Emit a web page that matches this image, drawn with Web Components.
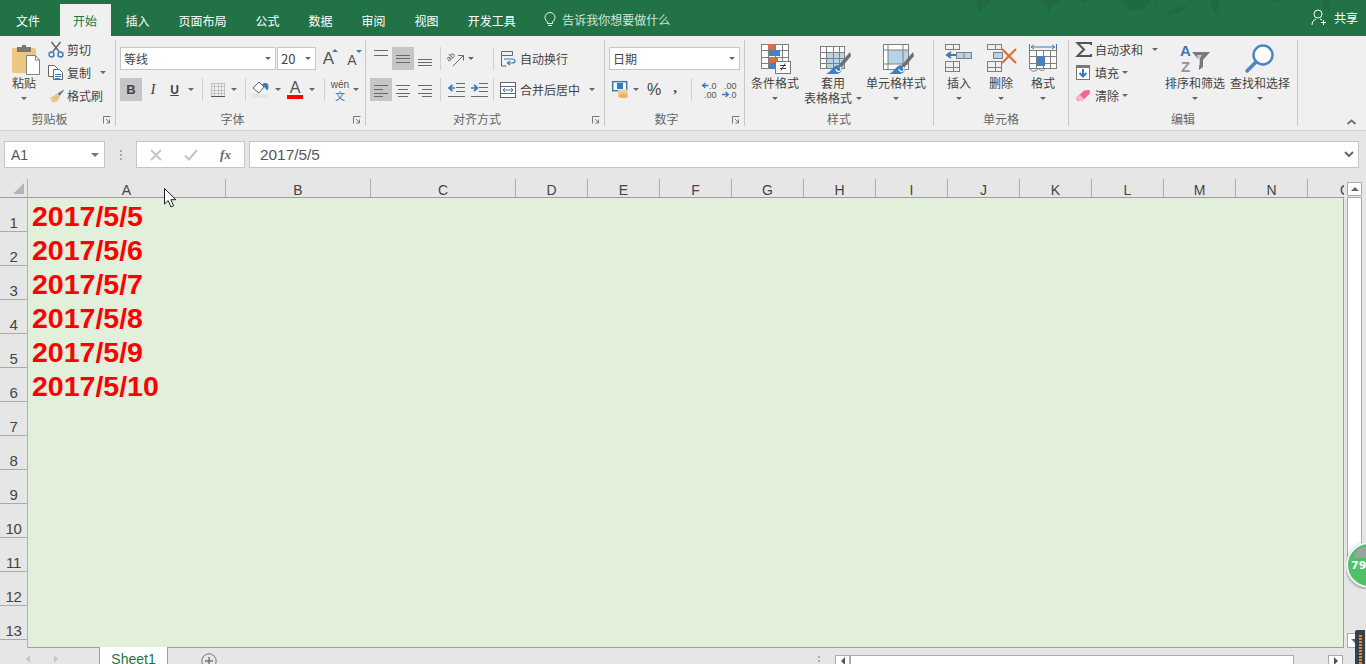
<!DOCTYPE html>
<html lang="zh">
<head>
<meta charset="utf-8">
<title>Excel</title>
<style>
  html, body { margin: 0; height: 664px; overflow: hidden; background: #e6e6e6; }
  body { position: relative; font: 12px "Liberation Sans", "Noto Sans CJK SC", sans-serif; color: #444; }
  .b { font: bold 13px "Liberation Sans", sans-serif; }
  .i { font: italic 15px "Liberation Serif", serif; }
  .u { font: bold 12px "Liberation Sans", sans-serif; text-decoration: underline; }
  .pct { font: 16px "Liberation Sans", sans-serif; }
  .comma { font: bold 15px "Liberation Serif", serif; margin-top: -5px; }
  .grow { font: 17px "Liberation Sans", sans-serif; position: relative; color: #555; }
  .shrink { font: 14px "Liberation Sans", sans-serif; position: relative; color: #555; margin-top: 3px; }
  .grow::after, .shrink::after { content: ""; position: absolute; left: 9px; top: 0; border: 3px solid transparent; }
  .grow::after { border-bottom-color: #3a7ab8; top: -3px; }
  .shrink::after { border-top-color: #3a7ab8; top: -2px; }
  .acolor { font: 16px/15px "Liberation Sans", sans-serif; color: #555; border-bottom: 4px solid #f00; width: 16px; text-align: center; display: block; }
  .wen { display: flex; flex-direction: column; align-items: center; font: 10px/11px "Liberation Sans", sans-serif; color: #555; }
  .wen b { font: 10px/11px "Noto Sans CJK SC", sans-serif; color: #2e75b6; }
  .big-size { font-size: 13px; }
</style>
</head>
<body>
<xl-app>
  <xl-titlebar>
    <xl-tab first>文件</xl-tab>
    <xl-tab active>开始</xl-tab>
    <xl-tab>插入</xl-tab>
    <xl-tab>页面布局</xl-tab>
    <xl-tab>公式</xl-tab>
    <xl-tab>数据</xl-tab>
    <xl-tab>审阅</xl-tab>
    <xl-tab>视图</xl-tab>
    <xl-tab>开发工具</xl-tab>
  </xl-titlebar>

  <xl-ribbon>
    <xl-group w="116" label="剪贴板" launcher pad="7">
      <xl-big w="34" icon="paste" shift="2" caret>粘贴</xl-big>
      <xl-col gap="7">
        <xl-small icon="cut">剪切</xl-small>
        <xl-small icon="copy" caret="9">复制</xl-small>
        <xl-small icon="brush">格式刷</xl-small>
      </xl-col>
    </xl-group>

    <xl-group w="250" label="字体" launcher pad="4">
      <xl-rows>
        <xl-row>
          <xl-select w="157" after="1">等线</xl-select>
          <xl-select w="39"><span class="big-size">20</span></xl-select>
          <xl-btn w="25"><span class="grow">A</span></xl-btn>
          <xl-btn w="22"><span class="shrink">A</span></xl-btn>
        </xl-row>
        <xl-row>
          <xl-btn w="22" active><span class="b">B</span></xl-btn>
          <xl-btn w="22"><span class="i">I</span></xl-btn>
          <xl-btn w="21"><span class="u">U</span></xl-btn>
          <xl-caret w="12"></xl-caret>
          <xl-sep w="10"></xl-sep>
          <xl-btn w="21"><xl-icon name="border"></xl-icon></xl-btn>
          <xl-caret w="12"></xl-caret>
          <xl-sep w="10"></xl-sep>
          <xl-btn w="22"><xl-icon name="fillcolor"></xl-icon></xl-btn>
          <xl-caret w="11"></xl-caret>
          <xl-btn w="24"><span class="acolor">A</span></xl-btn>
          <xl-caret w="10"></xl-caret>
          <xl-sep w="14"></xl-sep>
          <xl-btn w="18"><span class="wen">wén<b>文</b></span></xl-btn>
          <xl-caret w="14"></xl-caret>
        </xl-row>
      </xl-rows>
    </xl-group>

    <xl-group w="239" label="对齐方式" launcher pad="4">
      <xl-rows>
        <xl-row>
          <xl-btn w="22"><xl-icon name="vtop"></xl-icon></xl-btn>
          <xl-btn w="22" active><xl-icon name="vmid"></xl-icon></xl-btn>
          <xl-btn w="22"><xl-icon name="vbot"></xl-icon></xl-btn>
          <xl-sep w="8"></xl-sep>
          <xl-btn w="23"><xl-icon name="orient"></xl-icon></xl-btn>
          <xl-caret w="8"></xl-caret>
          <xl-btn w="14"></xl-btn>
          <xl-sep w="8"></xl-sep>
          <xl-btn w="23"><xl-icon name="wrap"></xl-icon></xl-btn>
          <xl-label>自动换行</xl-label>
        </xl-row>
        <xl-row>
          <xl-btn w="22" active><xl-icon name="left"></xl-icon></xl-btn>
          <xl-btn w="22"><xl-icon name="center"></xl-icon></xl-btn>
          <xl-btn w="22"><xl-icon name="right"></xl-icon></xl-btn>
          <xl-sep w="8"></xl-sep>
          <xl-btn w="24"><xl-icon name="outdent"></xl-icon></xl-btn>
          <xl-btn w="22"><xl-icon name="indent"></xl-icon></xl-btn>
          <xl-sep w="6"></xl-sep>
          <xl-btn w="24"><xl-icon name="merge"></xl-icon></xl-btn>
          <xl-label>合并后居中</xl-label>
          <xl-caret w="24"></xl-caret>
        </xl-row>
      </xl-rows>
    </xl-group>

    <xl-group w="140" label="数字" launcher pad="4">
      <xl-rows>
        <xl-row><xl-select w="131">日期</xl-select></xl-row>
        <xl-row>
          <xl-btn w="22"><xl-icon name="currency"></xl-icon></xl-btn>
          <xl-caret w="10"></xl-caret>
          <xl-btn w="26"><span class="pct">%</span></xl-btn>
          <xl-btn w="16"><span class="comma">,</span></xl-btn>
          <xl-sep w="16"></xl-sep>
          <xl-btn w="19"><xl-icon name="decinc"></xl-icon></xl-btn>
          <xl-btn w="22"><xl-icon name="decdec"></xl-icon></xl-btn>
        </xl-row>
      </xl-rows>
    </xl-group>

    <xl-group w="189" label="样式" pad="1">
      <xl-big w="58" icon="condfmt" shift="1" caret>条件格式</xl-big>
      <xl-big w="58" icon="tablefmt" shift="2" line2="表格格式" caret>套用</xl-big>
      <xl-big w="68" icon="cellstyle" shift="2" caret>单元格样式</xl-big>
    </xl-group>

    <xl-group w="135" label="单元格" pad="4">
      <xl-big w="42" icon="insert" caret>插入</xl-big>
      <xl-big w="42" icon="delete" shift="1" caret>删除</xl-big>
      <xl-big w="42" icon="format" caret>格式</xl-big>
    </xl-group>

    <xl-group w="229" label="编辑" pad="7">
      <xl-col w="89">
        <xl-small icon="sigma" caret="9">自动求和</xl-small>
        <xl-small icon="filldown" caret="3">填充</xl-small>
        <xl-small icon="eraser" caret="3">清除</xl-small>
      </xl-col>
      <xl-big w="60" icon="sort" caret>排序和筛选</xl-big>
      <xl-big w="70" icon="find" caret>查找和选择</xl-big>
    </xl-group>
  </xl-ribbon>

  <xl-formula-bar name="A1" value="2017/5/5"></xl-formula-bar>

  <xl-sheet values="2017/5/5,2017/5/6,2017/5/7,2017/5/8,2017/5/9,2017/5/10"></xl-sheet>

  <xl-footer sheet="Sheet1"></xl-footer>
</xl-app>

<xl-overlays></xl-overlays>

<script>
const G = '#6a6a6a', B = '#3a7ab8', O = '#d9703c', LB = '#b7d3e6';
const svg = (w, h, body) => `<svg xmlns="http://www.w3.org/2000/svg" width="${w}" height="${h}" viewBox="0 0 ${w} ${h}" style="display:block;overflow:visible">${body}</svg>`;
const grid3 = (x, y, w, h, cols, rows) => {
  let s = `<rect x="${x + .5}" y="${y + .5}" width="${w - 1}" height="${h - 1}" fill="none" stroke="#7f7f7f"/>`;
  for (let i = 1; i < cols; i++) s += `<path d="M${x + Math.round(w * i / cols) + .5} ${y}v${h}" stroke="#7f7f7f"/>`;
  for (let i = 1; i < rows; i++) s += `<path d="M${x} ${y + Math.round(h * i / rows) + .5}h${w}" stroke="#7f7f7f"/>`;
  return s;
};
const lines = (arr) => arr.map(([x, y, w, c]) => `<path d="M${x} ${y + .5}h${w}" stroke="${c || G}"/>`).join('');
const brushTip = `<path d="M30 8 L18 22 L21 24 L31 12Z" fill="#707070"/><path d="M17 21 C12 23 11 28 6 30 L17 30 C21 29 23 26 21 23Z" fill="#3f7fbd"/><path d="M16 25 a2.5 2.5 0 1 0 4 -2" fill="none" stroke="#fff" stroke-width="1.2"/>`;
const svgText = (x, y, t, size, fill, extra) => `<text x="${x}" y="${y}" font-family="Liberation Sans" font-size="${size}" fill="${fill}" ${extra || ''}>${t}</text>`;

const ICONS = {
  paste: svg(28, 32, `<rect y="4" width="24" height="25" rx="1.5" fill="#ecc781"/><path d="M5 8V3h5V1h4v2h5v5z" fill="#787878"/><path d="M14.5 11.5h9l4 4.5v14.5h-13z" fill="#fff" stroke="#7f7f7f"/><path d="M23.5 11.5v4.5h4" fill="none" stroke="#7f7f7f"/>`),
  cut: svg(16, 16, `<path d="M5 9.5 12.5 0M11 9.5 3.5 0" stroke="#666" stroke-width="1.5" fill="none"/><circle cx="3.5" cy="12.5" r="2.5" fill="none" stroke="${B}" stroke-width="1.4"/><circle cx="12.5" cy="12.5" r="2.5" fill="none" stroke="${B}" stroke-width="1.4"/>`),
  copy: svg(16, 15, `<path d="M.5.5h6l3 3v8h-9z" fill="#fff" stroke="#666"/><path d="M5.5 4.5h6l3 3v7h-9z" fill="#fff" stroke="#666"/><path d="M7 9.5h6M7 11.5h6M7 13.5h5" stroke="${B}"/>`),
  brush: svg(16, 14, `<path d="M16 .5 9.5 4.5 11.5 7 15.5 2z" fill="#757575"/><path d="M8.5 4.5 12 8 9 12.5 5.5 13.5 3 12l1-2-3.5-.5C3 8.5 6 7 8.5 4.5z" fill="#e8c582"/>`),
  border: svg(14, 14, `<path d="M.5.5h13M.5 3.5h13M.5 7.5h13M.5 10.5h13M.5.5v13M3.5.5v13M7.5.5v13M10.5.5v13M13.5.5v13" stroke="#a0a0a0" stroke-dasharray="1 1" fill="none"/><path d="M0 13.5h14" stroke="#555"/>`),
  fillcolor: svg(18, 18, `<rect x="0" y="13" width="16" height="4" fill="#dfeadb"/><path d="M1 7 7 1l5 5-5 6z" fill="#fff" stroke="#666"/><path d="M10 3.5c2-2 5-2 6 0s.5 4-.5 6c-1.500-1-3-4-5.500-6z" fill="${B}"/>`),
  vtop: svg(14, 23, lines([[0, 3, 14], [0, 8, 14]])),
  vmid: svg(14, 23, lines([[0, 8, 14], [0, 11, 14], [0, 15, 14]])),
  vbot: svg(14, 23, lines([[0, 12, 14], [0, 15, 14], [0, 18, 14]])),
  left: svg(14, 23, lines([[0, 7, 14], [0, 11, 9], [0, 15, 14], [0, 18, 9]])),
  center: svg(14, 23, lines([[0, 7, 14], [2, 11, 10], [0, 15, 14], [2, 18, 10]])),
  right: svg(14, 23, lines([[0, 7, 14], [4, 11, 10], [0, 15, 14], [4, 18, 10]])),
  orient: svg(17, 17, `<text transform="translate(2 12) rotate(-45)" font-family="Liberation Sans" font-size="8" fill="#555">ab</text><path d="M6 16 16 6" stroke="#666" fill="none"/><path d="M11 5.5h5.5v5" stroke="#666" fill="none"/>`),
  outdent: svg(17, 16, `${lines([[8, 1, 9], [8, 5, 9], [8, 9, 9], [0, 14, 17]])}<path d="M7 6H2M4.5 3 1 6l3.500 3" stroke="${B}" stroke-width="1.7" fill="none"/>`),
  indent: svg(17, 16, `${lines([[8, 1, 9], [8, 5, 9], [8, 9, 9], [0, 14, 17]])}<path d="M0 6h5M3 3l3.500 3L3 9" stroke="${B}" stroke-width="1.7" fill="none"/>`),
  wrap: svg(16, 16, `<path d="M.5.5h11v4h-11zM.5 4.5v10.500h5" fill="none" stroke="#666"/><path d="M3 8h8c4 0 4 4 0 4H7M9 10l-2.500 2L9 14" fill="none" stroke="${B}" stroke-width="1.2"/>`),
  merge: svg(16, 16, `<rect x=".5" y=".5" width="15" height="15" fill="#fff" stroke="#666"/><path d="M.5 4.5h15M.5 11.5h15" stroke="#666"/><path d="M3 8h10M5 6 3 8l2 2M11 6l2 2-2 2" fill="none" stroke="${B}"/>`),
  currency: svg(17, 17, `<rect x=".7" y=".7" width="14" height="9" fill="#fff" stroke="${B}" stroke-width="1.5"/><rect x="5" y="2" width="6" height="6" fill="${B}"/><ellipse cx="11" cy="10" rx="5" ry="2" fill="#f1d59a"/><ellipse cx="11" cy="12.5" rx="5" ry="2" fill="#ecc781"/><ellipse cx="11" cy="15" rx="5" ry="2" fill="#e6b85c"/>`),
  decinc: svg(16, 18, `<path d="M7.500 4.500H2M4.500 2 1.500 4.500l3 2.500" stroke="${B}" stroke-width="1.3" fill="none"/>${svgText(8, 8, '.0', 9, '#555')}${svgText(3, 17, '.00', 9, '#555')}`),
  decdec: svg(16, 18, `${svgText(3, 8, '.00', 9, '#555')}<path d="M1 13.500h6M4.500 11l3 2.500-3 2.500" stroke="${B}" stroke-width="1.3" fill="none"/>${svgText(8, 17, '.0', 9, '#555')}`),
  condfmt: svg(30, 30, `<rect x=".5" y=".5" width="27" height="24" fill="#fff"/>${grid3(0, 0, 28, 25, 4, 4)}<rect x="7" y="0" width="7" height="6" fill="${O}"/><rect x="8" y="6" width="11" height="6" fill="#4a80bd"/><rect x="8" y="13" width="9" height="6" fill="${O}"/><rect x="8" y="19" width="6" height="6" fill="#4a80bd"/><rect x="14.5" y="17.5" width="15" height="12" fill="#fff" stroke="#777"/><path d="M19 21.5h6M19 24.5h6M24 19.5l-4 7" stroke="#444" fill="none"/>`),
  tablefmt: svg(30, 30, `<g transform="translate(0 2)"><rect width="25" height="23" fill="#fff"/><rect x="6" y="6" width="19" height="17" fill="${LB}"/>${grid3(0, 0, 25, 23, 4, 4)}</g>${brushTip}`),
  cellstyle: svg(30, 30, `<rect width="26" height="26" fill="#fff"/><rect x="5" y="6" width="20" height="14" fill="${LB}"/>${grid3(0, 0, 26, 26, 1, 1)}<path d="M5 0v26M20 0v26M0 6h26M0 20h26" stroke="#7f7f7f"/>${brushTip}`),
  insert: svg(28, 28, `${grid3(0, 0, 15, 6, 2, 1)}<path d="M11 11H3M6 8 2 11l4 3" stroke="${B}" stroke-width="2" fill="none"/><rect x="11.5" y="8.5" width="15" height="6" fill="${LB}" stroke="#7f7f7f"/><path d="M19 8v6" stroke="#7f7f7f"/>${grid3(0, 17, 15, 11, 2, 2)}`),
  delete: svg(30, 28, `${grid3(0, 0, 15, 6, 2, 1)}<rect x="6.5" y="8.5" width="9" height="6" fill="${LB}" stroke="#7f7f7f"/>${grid3(0, 17, 15, 11, 2, 2)}<path d="M15 5l14 14M29 5 15 19" stroke="${O}" stroke-width="2.2"/>`),
  format: svg(28, 28, `<path d="M2 3h24M5 1 2 3l3 2M23 1l3 2-3 2" stroke="${B}" fill="none"/><path d="M.5 0v6M27.5 0v6" stroke="${B}"/><rect y="6" width="28" height="19" fill="#fff"/>${grid3(0, 6, 28, 19, 4, 3)}<rect x="8" y="12" width="8" height="10" fill="#4a80bd"/><path d="M1 25c2 3 5 3 8 0M10 25c2 2 4 2 6 0" fill="none" stroke="#7f7f7f"/>`),
  sigma: svg(16, 15, `<path d="M15 3V1H1.5L8 7.5 1.5 14H15v-2" fill="none" stroke="#555" stroke-width="2"/>`),
  filldown: svg(14, 15, `<rect x=".5" y=".5" width="13" height="14" fill="#fff" stroke="#777"/><rect x="0" y="0" width="14" height="3" fill="#777"/><path d="M7 4v7M3.500 8 7 11.500 10.500 8" stroke="${B}" stroke-width="2" fill="none"/>`),
  eraser: svg(15, 13, `<path d="M8 1.500 14 1 13.500 5 6 12 1.500 12 0 9z" fill="#f0669a"/><path d="M0 9l3 3h3l2-2-4-4z" fill="#f9b8d0"/>`),
  sort: svg(30, 30, `${svgText(0, 12, 'A', 15, '#3a7ab8', 'font-weight="bold"')}${svgText(1, 28, 'Z', 15, '#9b8ea3', 'font-weight="bold"')}<path d="M12 8h18l-7 8v7l-4 3V16z" fill="#7a7a7a"/><path d="M17 11h5l-2 3v7l-1 .5z" fill="#fff" opacity=".6"/>`),
  find: svg(30, 30, `<circle cx="18" cy="11" r="9.5" fill="#fff" stroke="#4a86c0" stroke-width="2.5"/><path d="M11 18 2 27" stroke="#4a86c0" stroke-width="3.5" stroke-linecap="round"/>`)
};

class XlIcon extends HTMLElement {
  connectedCallback() {
    this.attachShadow({ mode: 'open' }).innerHTML = `<style>:host{display:block;line-height:0}</style>${ICONS[this.getAttribute('name')] || ''}`;
  }
}

class XlApp extends HTMLElement {
  constructor() {
    super();
    this.attachShadow({ mode: 'open' }).innerHTML = `<style>:host{display:flex;flex-direction:column;height:664px;overflow:hidden}</style><slot></slot>`;
  }
}

class XlTitlebar extends HTMLElement {
  constructor() {
    super();
    this.attachShadow({ mode: 'open' }).innerHTML = `
      <style>
        :host { display: flex; height: 36px; flex: none; background: #217346; color: #fff; position: relative; overflow: hidden; }
        .leaves { position: absolute; left: 960px; top: 0; }
        .tell { display: flex; align-items: center; gap: 6px; margin-left: 14px; padding-top: 3px; color: #d3e3da; font-family: "Noto Sans CJK SC", sans-serif; position: relative; }
        .share { margin-left: auto; display: flex; align-items: center; gap: 7px; padding: 0 8px 1px 0; position: relative; font-family: "Noto Sans CJK SC", sans-serif; }
      </style>
      <svg class="leaves" width="370" height="20" viewBox="0 0 370 20" fill="#1f6a42">
        <path d="M15 0h16l-4 6 -2 3-3 -2 -1 7C18 11 18 5 15 0z"/>
        <path d="M80 0h20l-6 5-3 1 -1 9C87 10 84 4 80 0z"/>
        <path d="M120 0h8l-5 3z"/>
        <path d="M160 0h30c-2 6-10 12-18 11C167 10 163 5 160 0z"/>
        <path d="M193 0h3l2 9z"/>
        <path d="M206 15c4-5 12-8 20-9-2 5-12 10-20 9zM226 6c3-2 5-4 7-6l1 0c-2 3-4 5-8 6z"/>
        <path d="M250 0h8c1 5 0 10-2 14-2-4-5-9-6-14z"/>
        <path d="M312 0h12l-6 2z"/>
        <path d="M362 0h8v14c-4-4-8-9-8-14z"/>
      </svg>
      <slot></slot>
      <div class="tell">
        <svg width="12" height="15" viewBox="0 0 12 15" fill="none" stroke="#eef4f0"><path d="M3.5 10C2 8.500 1 7.500 1 5.500a5 5 0 0 1 10 0c0 2-1 3-2.500 4.500v1.500h-5zM4 13.500h4"/></svg>
        <span>告诉我你想要做什么</span>
      </div>
      <div class="share">
        <svg width="16" height="17" viewBox="0 0 16 17" fill="none" stroke="#fff"><circle cx="7" cy="5" r="4"/><path d="M1 16c0-3 1.500-5 4-6M9 10c1 .3 1.500.6 2 1M12.500 11v5M10 13.500h5"/></svg>
        <span>共享</span>
      </div>`;
  }
}

class XlTab extends HTMLElement {
  constructor() {
    super();
    this.attachShadow({ mode: 'open' }).innerHTML = `
      <style>
        :host { display: flex; align-items: center; height: 32px; margin-top: 4px; padding: 0 14.5px; flex: none; font: 12px "Noto Sans CJK SC", sans-serif; color: #fff; position: relative; z-index: 1; }
        :host([first]) { padding: 0 20px 0 16px; }
        :host([active]) { background: #f0f0f0; color: #217346; padding: 0 14px 0 13px; }
      </style><slot></slot>`;
  }
}

class XlRibbon extends HTMLElement {
  constructor() {
    super();
    this.attachShadow({ mode: 'open' }).innerHTML = `
      <style>
        :host { display: flex; height: 95px; flex: none; box-sizing: border-box; padding: 4px 0; background: #f0f0f0; border-bottom: 1px solid #d2d2d2; position: relative; }
        svg { position: absolute; right: 10px; bottom: 5px; }
      </style>
      <slot></slot>
      <svg width="9" height="6" viewBox="0 0 9 6" fill="none" stroke="#777" stroke-width="2"><path d="M.5 5 4.500 1.500 8.500 5"/></svg>`;
  }
}

class XlGroup extends HTMLElement {
  connectedCallback() {
    const launcher = this.hasAttribute('launcher');
    this.attachShadow({ mode: 'open' }).innerHTML = `
      <style>
        :host { display: flex; flex-direction: column; flex: none; box-sizing: border-box; width: ${this.getAttribute('w')}px; border-right: 1px solid #c8c8c8; }
        .body { display: flex; height: 70px; padding-left: ${this.getAttribute('pad') || 0}px; font: 12px "Noto Sans CJK SC", sans-serif; color: #444; }
        .foot { display: flex; height: 16px; align-items: center; font: 12px/16px "Noto Sans CJK SC", sans-serif; color: #666; }
        .label { flex: 1; text-align: center; padding-top: 2px; }
        .launch { width: 16px; flex: none; display: flex; justify-content: flex-end; padding: 3px 4px 0 0; box-sizing: border-box; }
      </style>
      <div class="body"><slot></slot></div>
      <div class="foot">
        <div class="label">${this.getAttribute('label')}</div>
        ${launcher ? `<div class="launch"><svg width="8" height="8" viewBox="0 0 8 8" fill="none" stroke="#777"><path d="M.5 7.500v-7h7M3 3l3.500 3.500M6.500 3.500v3.500h-3"/></svg></div>` : ''}
      </div>`;
  }
}

const caretCss = `.caret { width: 0; height: 0; border: 3px solid transparent; border-top-color: #666; border-bottom: 0; display: inline-block; flex: none; }`;

class XlBig extends HTMLElement {
  connectedCallback() {
    const line2 = this.getAttribute('line2');
    const shift = +(this.getAttribute('shift') || 0);
    this.attachShadow({ mode: 'open' }).innerHTML = `
      <style>
        :host { display: flex; flex-direction: column; align-items: center; flex: none; width: ${this.getAttribute('w')}px; }
        .icon { height: 35px; width: 30px; display: flex; justify-content: center; padding-top: 4px; box-sizing: border-box; margin-left: ${shift * 2}px; }
        .t { line-height: 15px; white-space: nowrap; display: flex; align-items: center; justify-content: center; gap: 4px; height: 15px; }
        ${caretCss}
        .caret { margin-top: 2px; }
      </style>
      <div class="icon"><xl-icon name="${this.getAttribute('icon')}"></xl-icon></div>
      <div class="t"><slot></slot></div>
      <div class="t">${line2 || ''}<span class="caret"></span></div>`;
  }
}

class XlCol extends HTMLElement {
  connectedCallback() {
    this.attachShadow({ mode: 'open' }).innerHTML = `
      <style>:host { display: flex; flex-direction: column; flex: none; margin-top: -2px; margin-left: ${this.getAttribute('gap') || 0}px; ${this.hasAttribute('w') ? `width:${this.getAttribute('w')}px;` : ''} }</style><slot></slot>`;
  }
}

class XlSmall extends HTMLElement {
  connectedCallback() {
    const caret = this.getAttribute('caret');
    this.attachShadow({ mode: 'open' }).innerHTML = `
      <style>
        :host { display: flex; align-items: center; height: 23px; white-space: nowrap; }
        .icon { width: 19px; flex: none; }
        ${caretCss}
        .caret { margin-left: ${caret}px; }
      </style>
      <div class="icon"><xl-icon name="${this.getAttribute('icon')}"></xl-icon></div>
      <slot></slot>
      ${caret ? '<span class="caret"></span>' : ''}`;
  }
}

class XlRows extends HTMLElement {
  constructor() {
    super();
    this.attachShadow({ mode: 'open' }).innerHTML = `<style>:host { display: flex; flex-direction: column; gap: 8px; padding-top: 7px; }</style><slot></slot>`;
  }
}

class XlRow extends HTMLElement {
  constructor() {
    super();
    this.attachShadow({ mode: 'open' }).innerHTML = `<style>:host { display: flex; align-items: center; height: 23px; }</style><slot></slot>`;
  }
}

class XlBtn extends HTMLElement {
  connectedCallback() {
    this.attachShadow({ mode: 'open' }).innerHTML = `
      <style>
        :host { display: flex; align-items: center; justify-content: center; flex: none; height: 23px; width: ${this.getAttribute('w')}px; }
        :host([active]) { background: #c6c6c6; }
      </style><slot></slot>`;
  }
}

class XlCaret extends HTMLElement {
  connectedCallback() {
    this.attachShadow({ mode: 'open' }).innerHTML = `
      <style>:host { display: flex; align-items: center; justify-content: center; flex: none; height: 23px; width: ${this.getAttribute('w')}px; } ${caretCss}</style>
      <span class="caret"></span>`;
  }
}

class XlSep extends HTMLElement {
  connectedCallback() {
    this.attachShadow({ mode: 'open' }).innerHTML = `
      <style>
        :host { display: flex; justify-content: center; flex: none; height: 23px; width: ${this.getAttribute('w')}px; }
        i { width: 1px; background: #d0d0d0; }
      </style><i></i>`;
  }
}

class XlLabel extends HTMLElement {
  constructor() {
    super();
    this.attachShadow({ mode: 'open' }).innerHTML = `<style>:host { display: block; white-space: nowrap; flex: none; }</style><slot></slot>`;
  }
}

class XlSelect extends HTMLElement {
  connectedCallback() {
    const after = +(this.getAttribute('after') || 0);
    this.attachShadow({ mode: 'open' }).innerHTML = `
      <style>
        :host { display: flex; align-items: center; justify-content: space-between; flex: none; box-sizing: border-box; height: 23px; width: ${this.getAttribute('w') - after}px; margin-right: ${after}px; padding: 0 4px 0 3px; background: #fff; border: 1px solid #c6c6c6; font-size: 12px; }
        ${caretCss}
      </style>
      <slot></slot><span class="caret"></span>`;
  }
}

class XlFormulaBar extends HTMLElement {
  connectedCallback() {
    this.attachShadow({ mode: 'open' }).innerHTML = `
      <style>
        :host { display: flex; flex: none; height: 48px; box-sizing: border-box; padding: 10px 0 0 4px; background: #e6e6e6; font: 14px "Liberation Sans", sans-serif; color: #555; }
        .box { box-sizing: border-box; height: 27px; background: #fff; border: 1px solid #c6c6c6; display: flex; align-items: center; }
        .name { width: 101px; padding: 0 5px 0 6px; justify-content: space-between; }
        .caret { border: 4px solid transparent; border-top-color: #777; border-bottom: 0; }
        .dots { width: 31px; display: flex; flex-direction: column; align-items: center; justify-content: center; gap: 2px; height: 27px; }
        .dots i { width: 2px; height: 2px; background: #aaa; }
        .btns { width: 109px; margin-right: 4px; justify-content: space-around; padding: 0 1px; }
        .fx { font: italic bold 13px "Liberation Serif", serif; color: #666; width: 36px; text-align: center; }
        .ico { width: 36px; display: flex; justify-content: center; }
        .value { width: 1110px; padding: 0 4px 0 10px; justify-content: space-between; font-size: 15.4px; }
      </style>
      <div class="box name"><span>${this.getAttribute('name')}</span><span class="caret"></span></div>
      <div class="dots"><i></i><i></i><i></i></div>
      <div class="box btns">
        <span class="ico"><svg width="12" height="12" viewBox="0 0 12 12" stroke="#c4c4c4" stroke-width="1.8"><path d="M1 1l10 10M11 1 1 11"/></svg></span>
        <span class="ico"><svg width="14" height="12" viewBox="0 0 14 12" fill="none" stroke="#c4c4c4" stroke-width="2"><path d="M1 6.500 5 10.500 13 1"/></svg></span>
        <span class="fx">fx</span>
      </div>
      <div class="box value"><span>${this.getAttribute('value')}</span>
        <svg width="10" height="7" viewBox="0 0 10 7" fill="none" stroke="#666" stroke-width="2"><path d="M1 1l4 4 4-4"/></svg></div>`;
  }
}

class XlSheet extends HTMLElement {
  connectedCallback() {
    const cols = [['A', 198], ['B', 145], ['C', 145]];
    'DEFGHIJKLMN'.split('').forEach(c => cols.push([c, 72]));
    const values = this.getAttribute('values').split(',');
    const heads = cols.map(([c, w]) => `<div class="ch" style="width:${w}px">${c}</div>`).join('');
    let nums = '', rows = '';
    for (let i = 0; i < 13; i++) {
      nums += `<div class="rh">${i + 1}</div>`;
      rows += `<div class="cell">${values[i] || ''}</div>`;
    }
    this.attachShadow({ mode: 'open' }).innerHTML = `
      <style>
        :host { display: flex; flex: none; height: 469px; font: 14px "Liberation Sans", sans-serif; color: #444; }
        .main { width: 1344px; height: 469px; display: grid; grid-template-columns: 28px 1316px; grid-template-rows: 19px 450px; overflow: hidden; flex: none; }
        .corner { background: #e6e6e6; border-bottom: 1px solid #9e9e9e; border-right: 1px solid #b4b4b4; box-sizing: border-box; display: flex; justify-content: flex-end; align-items: flex-end; padding: 0 3px 3px 0; }
        .heads { display: flex; overflow: hidden; background: #e6e6e6; border-bottom: 1px solid #9e9e9e; box-sizing: border-box; }
        .ch { flex: none; box-sizing: border-box; border-right: 1px solid #b0b0b0; text-align: center; line-height: 22px; height: 18px; }
        .last { width: 36px; border: 0; text-align: left; padding-left: 32px; }
        .nums { overflow: hidden; background: #e6e6e6; border-right: 1px solid #b4b4b4; box-sizing: border-box; }
        .rh { height: 34px; box-sizing: border-box; border-bottom: 1px solid #aaa; text-align: center; font-size: 15px; letter-spacing: -.3px; line-height: 17px; padding-top: 16px; }
        .cells { background: #e2efda; border-right: 1px solid #9e9e9e; border-bottom: 1px solid #9e9e9e; box-sizing: border-box; overflow: hidden; }
        .cell { height: 34px; padding-left: 4px; font: bold 28.5px/36px "Liberation Sans", sans-serif; color: #f00; }
        .v { width: 22px; flex: none; display: flex; flex-direction: column; padding: 3px 0 0 3px; box-sizing: border-box; height: 469px; }
        .sb { width: 15px; box-sizing: border-box; background: #fff; border: 1px solid #ababab; display: flex; justify-content: center; align-items: center; flex: none; }
        .up { height: 14px; margin-bottom: 1px; }
        .thumb { height: 363px; }
        .down { height: 15px; margin-top: auto; }
        .up i { border: 4px solid transparent; border-bottom-color: #666; border-top: 0; }
        .down i { border: 4px solid transparent; border-top-color: #666; border-bottom: 0; }
      </style>
      <div class="main">
        <div class="corner"><svg width="11" height="11" viewBox="0 0 11 11"><path d="M11 0v11H0z" fill="#b4b4b4"/></svg></div>
        <div class="heads">${heads}<div class="ch last">O</div></div>
        <div class="nums">${nums}</div>
        <div class="cells">${rows}</div>
      </div>
      <div class="v">
        <div class="sb up"><i></i></div>
        <div class="sb thumb"></div>
        <div class="sb down"><i></i></div>
      </div>`;
  }
}

class XlFooter extends HTMLElement {
  connectedCallback() {
    this.attachShadow({ mode: 'open' }).innerHTML = `
      <style>
        :host { display: flex; flex: 1; background: #e6e6e6; font: 14px "Liberation Sans", sans-serif; position: relative; }
        .nav { width: 99px; flex: none; display: flex; gap: 24px; padding: 7px 0 0 26px; box-sizing: border-box; }
        .nav i { width: 0; height: 0; border: 4px solid transparent; }
        .nav .l { border-right-color: #c6c6c6; border-left: 0; }
        .nav .r { border-left-color: #c6c6c6; border-right: 0; }
        .tab { width: 69px; flex: none; box-sizing: border-box; margin-top: -1px; background: #fff; border: 1px solid #9e9e9e; border-top: 0; border-bottom: 0; color: #217346; text-align: center; line-height: 24px; height: 17px; overflow: hidden; }
        .add { margin: 5px 0 0 33px; flex: none; }
        .dots { margin-left: auto; display: flex; flex-direction: column; gap: 2px; padding-top: 8px; width: 2px; margin-right: 15px; }
        .dots i { width: 2px; height: 2px; background: #aaa; flex: none; }
        .h { display: flex; width: 508px; margin-right: 23px; padding-top: 7px; flex: none; }
        .sb { box-sizing: border-box; background: #fff; border: 1px solid #ababab; border-bottom: 0; height: 10px; display: flex; align-items: center; justify-content: center; }
        .sb.btn { width: 15px; flex: none; }
        .thumb { width: 444px; flex: none; }
        .gap { flex: 1; }
        .lt { border: 4px solid transparent; border-right-color: #555; border-left: 0; }
        .rt { border: 4px solid transparent; border-left-color: #555; border-right: 0; }
      </style>
      <div class="nav"><i class="l"></i><i class="r"></i></div>
      <div class="tab">${this.getAttribute('sheet')}</div>
      <svg class="add" width="16" height="16" viewBox="0 0 16 16" fill="none" stroke="#777"><circle cx="8" cy="8" r="7.2"/><path d="M8 4v8M4 8h8" stroke-width="1.5"/></svg>
      <div class="dots"><i></i><i></i><i></i></div>
      <div class="h">
        <div class="sb btn"><i class="lt"></i></div>
        <div class="sb thumb"></div>
        <div class="gap"></div>
        <div class="sb btn"><i class="rt"></i></div>
      </div>`;
  }
}

class XlOverlays extends HTMLElement {
  constructor() {
    super();
    this.attachShadow({ mode: 'open' }).innerHTML = `
      <style>
        :host { display: block; }
        .cursor { position: absolute; left: 164px; top: 188px; }
        .badge { position: absolute; left: 1346px; top: 542px; width: 20px; height: 47px; overflow: hidden; }
        .disc { width: 46px; height: 46px; box-sizing: border-box; border-radius: 50%; background: #4fbf69; border: 2px solid #f4f4f4; box-shadow: 0 1px 3px rgba(0,0,0,.45); font: bold 11px/46px "DejaVu Sans", sans-serif; color: #fff; padding-left: 3px; position: relative; overflow: hidden; }
        .disc::before { content: ""; position: absolute; left: 6px; top: 3px; width: 40px; height: 11px; background: #9aa39c; border-radius: 20px 0 0 0; }
        .disc span { position: relative; display: block; margin-top: -1px; }
        .meter { position: absolute; left: 1355px; top: 630px; width: 10px; height: 34px; background: #3a4048; border-radius: 2px 0 0 0; display: flex; justify-content: center; }
        .meter i { width: 3px; margin-top: 5px; background: repeating-linear-gradient(#d98a3c 0 2px, #3a4048 2px 3px); }
      </style>
      <svg class="cursor" width="14" height="21" viewBox="0 0 14 21"><path d="M.5.5v15.500l3.700-3.400 2.800 6.400 2.600-1.200-2.700-6.100 5 0z" fill="#fff" stroke="#222"/></svg>
      <div class="badge"><div class="disc"><span>79</span></div></div>
      <div class="meter"><i></i></div>`;
  }
}

const defs = {
  'xl-icon': XlIcon, 'xl-app': XlApp, 'xl-titlebar': XlTitlebar, 'xl-tab': XlTab,
  'xl-ribbon': XlRibbon, 'xl-group': XlGroup, 'xl-big': XlBig, 'xl-col': XlCol,
  'xl-small': XlSmall, 'xl-rows': XlRows, 'xl-row': XlRow, 'xl-btn': XlBtn,
  'xl-caret': XlCaret, 'xl-sep': XlSep, 'xl-label': XlLabel, 'xl-select': XlSelect,
  'xl-formula-bar': XlFormulaBar, 'xl-sheet': XlSheet, 'xl-footer': XlFooter, 'xl-overlays': XlOverlays
};
Object.keys(defs).forEach(k => customElements.define(k, defs[k]));
</script>
</body>
</html>
